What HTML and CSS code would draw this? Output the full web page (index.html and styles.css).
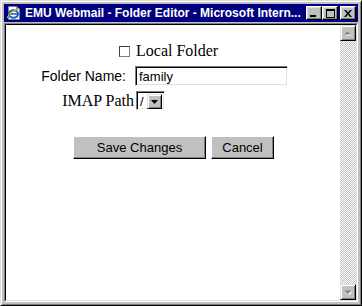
FILE: index.html
```html
<!DOCTYPE html>
<html>
<head>
<meta charset="utf-8">
<link rel="stylesheet" href="styles.css">
</head>
<body>
<div class="window">
  <div class="titlebar">
    <svg class="app-icon" width="16" height="16" viewBox="0 0 16 16">
      <path d="M2.5 1.5h8l3 3v10h-11z" fill="#fff" stroke="#808080"/>
      <path d="M10.5 1.5v3h3" fill="#c0c0c0" stroke="#808080"/>
      <ellipse cx="7.5" cy="9" rx="4.5" ry="3.8" fill="none" stroke="#1060d0" stroke-width="2"/>
      <path d="M3.5 9h8" stroke="#1060d0" stroke-width="1.6"/>
      <path d="M1 13 Q5 5 14 4" fill="none" stroke="#e0b020" stroke-width="1.2"/>
    </svg>
    <span class="title-text">EMU Webmail - Folder Editor - Microsoft Intern...</span>
    <div class="title-buttons">
      <div class="tbtn"><svg width="8" height="7" viewBox="0 0 8 7"><rect x="0" y="5" width="6" height="2" fill="#000"/></svg></div>
      <div class="tbtn"><svg width="9" height="9" viewBox="0 0 9 9"><path d="M0.5 0.5h8v8h-8z" fill="none" stroke="#000"/><rect x="0" y="0" width="9" height="2" fill="#000"/></svg></div>
      <div class="tbtn close"><svg width="8" height="7" viewBox="0 0 8 7"><path d="M0 0h2l2 2.5L6 0h2L5 3.5 8 7H6L4 4.5 2 7H0l3-3.5z" fill="#000"/></svg></div>
    </div>
  </div>
  <div class="client">
    <div class="client-inner">
      <div class="page">
        <div class="row-check">
          <span class="checkbox"></span>
          <span class="serif">Local Folder</span>
        </div>
        <div class="row row-name">
          <span class="label sans">Folder Name:</span>
          <div class="textbox">family</div>
        </div>
        <div class="row row-path">
          <span class="label serif">IMAP Path</span>
          <div class="select"><span class="sel-val">/</span><span class="sel-btn"><svg width="7" height="4" viewBox="0 0 7 4"><path d="M0 0h7L3.5 4z" fill="#000"/></svg></span></div>
        </div>
        <div class="row-buttons">
          <div class="btn btn-save">Save Changes</div>
          <div class="btn btn-cancel">Cancel</div>
        </div>
      </div>
      <div class="scrollbar">
        <div class="sbtn"><svg width="8" height="5" viewBox="0 0 8 5"><path d="M1.5 4.5L4.5 1.5L7.5 4.5z" fill="#fff"/><path d="M0.5 3.5L3.5 0.5L6.5 3.5z" fill="#808080"/></svg></div>
        <div class="track"></div>
        <div class="sbtn"><svg width="8" height="5" viewBox="0 0 8 5"><path d="M1.5 1.5h7l-3.5 3.5z" fill="#fff"/><path d="M0.5 0.5h7l-3.5 3.5z" fill="#808080"/></svg></div>
      </div>
    </div>
  </div>
</div>
</body>
</html>
```
FILE: styles.css
```css
* { box-sizing: border-box; }
html, body { margin: 0; padding: 0; background: #c0c0c0; }
.window {
  width: 362px;
  height: 306px;
  background: #c0c0c0;
  border: 1px solid;
  border-color: #dfdfdf #000 #000 #dfdfdf;
  box-shadow: inset 1px 1px #fff, inset -1px -1px #808080;
  padding: 3px;
  display: flex;
  flex-direction: column;
}
.titlebar {
  height: 18px;
  background: #000080;
  display: flex;
  align-items: center;
  padding-left: 2px;
  padding-right: 2px;
  margin-bottom: 1px;
  flex: none;
}
.app-icon { flex: none; margin-right: 3px; }
.title-text {
  color: #fff;
  font-family: "Liberation Sans", Arial, sans-serif;
  font-weight: bold;
  font-size: 12px;
  white-space: nowrap;
  flex: 1;
  overflow: hidden;
}
.title-buttons { display: flex; flex: none; }
.tbtn {
  width: 16px;
  height: 14px;
  background: #c0c0c0;
  border: 1px solid;
  border-color: #fff #000 #000 #fff;
  box-shadow: inset -1px -1px #808080, inset 1px 1px #dfdfdf;
  display: flex;
  align-items: center;
  justify-content: center;
}
.tbtn.close { margin-left: 2px; }
.client {
  flex: 1;
  border: 1px solid;
  border-color: #808080 #fff #fff #808080;
  display: flex;
}
.client-inner {
  flex: 1;
  border: 1px solid;
  border-color: #000 #dfdfdf #dfdfdf #000;
  display: flex;
}
.page {
  flex: 1;
  background: #fff;
  padding-top: 16px;
}
.serif { font-family: "Liberation Serif", "Times New Roman", serif; font-size: 16px; }
.sans { font-family: "Liberation Sans", Arial, sans-serif; font-size: 14px; }
.row-check {
  display: flex;
  align-items: center;
  padding-left: 113px;
  height: 20px;
}
.checkbox {
  width: 11px;
  height: 11px;
  border: 1px solid;
  border-color: #404040 #808080 #808080 #404040;
  background: #fff;
  margin-right: 6px;
}
.row {
  display: grid;
  grid-template-columns: 129px auto;
  align-items: center;
}
.label { justify-self: end; }
.row-name { margin-top: 5px; height: 20px; }
.row-name .label { margin-right: 9px; }
.row-path { margin-top: 5px; height: 19px; }
.row-path .label { margin-right: 1px; }
.textbox {
  width: 153px;
  height: 20px;
  border: 1px solid;
  border-color: #808080 #fff #fff #808080;
  box-shadow: inset 1px 1px #000, inset -1px -1px #dfdfdf;
  font-family: "Liberation Sans", Arial, sans-serif;
  font-size: 13px;
  padding: 2px 3px;
  line-height: 15px;
}
.select {
  margin-left: 1px;
  width: 29px;
  height: 19px;
  border: 1px solid;
  border-color: #808080 #fff #fff #808080;
  box-shadow: inset 1px 1px #000, inset -1px -1px #dfdfdf;
  padding: 2px;
  display: flex;
  font-family: "Liberation Sans", Arial, sans-serif;
  font-size: 13px;
}
.sel-val { flex: 1; line-height: 15px; padding-left: 1px; }
.sel-btn {
  width: 15px;
  height: 15px;
  background: #c0c0c0;
  border: 1px solid;
  border-color: #dfdfdf #000 #000 #dfdfdf;
  box-shadow: inset 1px 1px #fff, inset -1px -1px #808080;
  display: flex;
  align-items: center;
  justify-content: center;
}
.row-buttons {
  display: flex;
  gap: 5px;
  padding-left: 67px;
  margin-top: 26px;
}
.btn {
  height: 23px;
  background: #c0c0c0;
  border: 1px solid;
  border-color: #fff #000 #000 #fff;
  box-shadow: inset -1px -1px #808080;
  font-family: "Liberation Sans", Arial, sans-serif;
  font-size: 13px;
  display: flex;
  align-items: center;
  justify-content: center;
}
.btn-save { width: 133px; }
.btn-cancel { width: 63px; }
.scrollbar {
  width: 16px;
  flex: none;
  display: flex;
  flex-direction: column;
}
.sbtn {
  width: 16px;
  height: 16px;
  background: #c0c0c0;
  border: 1px solid;
  border-color: #dfdfdf #000 #000 #dfdfdf;
  box-shadow: inset 1px 1px #fff, inset -1px -1px #808080;
  display: flex;
  align-items: center;
  justify-content: center;
  flex: none;
}
.track {
  flex: 1;
  background: repeating-conic-gradient(#fff 0 25%, #c0c0c0 0 50%) 0 0 / 2px 2px;
}
```
